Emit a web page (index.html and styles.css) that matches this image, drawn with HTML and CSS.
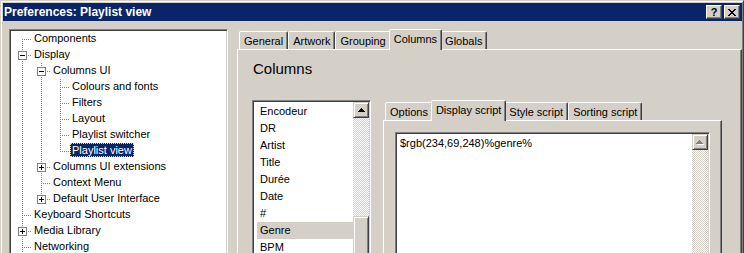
FILE: index.html
```html
<!DOCTYPE html>
<html lang="en">
<head>
  <meta charset="UTF-8" />
  <title>Preferences: Playlist view</title>
  <link rel="stylesheet" href="styles.css">
</head>
<body>
  <div class="window">
    <div class="titlebar">
      <span class="title">Preferences: Playlist view</span>
      <div class="caption-btns">
        <span class="cap-btn help">?</span>
        <span class="cap-btn close">
          <svg width="8" height="7" viewBox="0 0 8 7"><path d="M0 0h2v1H0zM6 0h2v1H6zM1 1h2v1H1zM5 1h2v1H5zM2 2h4v1H2zM3 3h2v1H3zM2 4h4v1H2zM1 5h2v1H1zM5 5h2v1H5zM0 6h2v1H0zM6 6h2v1H6z"/></svg>
        </span>
      </div>
    </div>

    <div class="client">
      <div class="tree">
        <div class="node"><span class="cell first"></span><span class="label">Components</span></div>
        <div class="node"><span class="cell tee"><i class="box minus"></i></span><span class="label">Display</span></div>
        <div class="node"><span class="cell pipe"></span><span class="cell tee"><i class="box minus"></i></span><span class="label">Columns UI</span></div>
        <div class="node"><span class="cell pipe"></span><span class="cell pipe"></span><span class="cell tee"></span><span class="label">Colours and fonts</span></div>
        <div class="node"><span class="cell pipe"></span><span class="cell pipe"></span><span class="cell tee"></span><span class="label">Filters</span></div>
        <div class="node"><span class="cell pipe"></span><span class="cell pipe"></span><span class="cell tee"></span><span class="label">Layout</span></div>
        <div class="node"><span class="cell pipe"></span><span class="cell pipe"></span><span class="cell tee"></span><span class="label">Playlist switcher</span></div>
        <div class="node"><span class="cell pipe"></span><span class="cell pipe"></span><span class="cell ell"></span><span class="label selected">Playlist view</span></div>
        <div class="node"><span class="cell pipe"></span><span class="cell tee"><i class="box plus"></i></span><span class="label">Columns UI extensions</span></div>
        <div class="node"><span class="cell pipe"></span><span class="cell tee"></span><span class="label">Context Menu</span></div>
        <div class="node"><span class="cell pipe"></span><span class="cell ell"><i class="box plus"></i></span><span class="label">Default User Interface</span></div>
        <div class="node"><span class="cell tee"></span><span class="label">Keyboard Shortcuts</span></div>
        <div class="node"><span class="cell tee"><i class="box plus"></i></span><span class="label">Media Library</span></div>
        <div class="node"><span class="cell tee"></span><span class="label">Networking</span></div>
        <div class="node"><span class="cell pipe"></span></div>
      </div>

      <div class="tabctl outer">
        <div class="tabs">
          <span class="tab">General</span>
          <span class="tab">Artwork</span>
          <span class="tab">Grouping</span>
          <span class="tab active">Columns</span>
          <span class="tab">Globals</span>
        </div>
        <div class="page">
          <h2 class="page-title">Columns</h2>
          <div class="columns-row">
            <div class="listbox">
              <ul class="items">
                <li>Encodeur</li>
                <li>DR</li>
                <li>Artist</li>
                <li>Title</li>
                <li>Durée</li>
                <li>Date</li>
                <li>#</li>
                <li class="sel">Genre</li>
                <li>BPM</li>
              </ul>
              <div class="vscroll">
                <span class="sb-btn"><svg width="7" height="4" viewBox="0 0 7 4"><path d="M3 0h1v1h1v1h1v1h1v1H0V3h1V2h1V1h1z"/></svg></span>
                <span class="sb-track upper"></span>
                <span class="sb-btn thumb"></span>
                <span class="sb-track"></span>
              </div>
            </div>

            <div class="tabctl inner">
              <div class="tabs">
                <span class="tab">Options</span>
                <span class="tab active">Display script</span>
                <span class="tab">Style script</span>
                <span class="tab">Sorting script</span>
              </div>
              <div class="page">
                <div class="script">
                  <div class="script-text">$rgb(234,69,248)%genre%</div>
                  <div class="vscroll">
                    <span class="sb-btn disabled"><svg width="8" height="5" viewBox="0 0 8 5"><path fill="#fff" d="M4 1h1v1h1v1h1v1h1v1H1V4h1V3h1V2h1z"/><path fill="#808080" d="M3 0h1v1h1v1h1v1h1v1H0V3h1V2h1V1h1z"/></svg></span>
                    <span class="sb-track"></span>
                  </div>
                </div>
              </div>
            </div>
          </div>
        </div>
      </div>
    </div>
  </div>
</body>
</html>
```

FILE: styles.css
```css
* {
  margin: 0;
  padding: 0;
  box-sizing: border-box;
}
:root {
  --face: #D4D0C8;
  --shadow: #808080;
  --dark: #404040;
  --vdots: repeating-linear-gradient(#808080 0 1px, transparent 1px 2px);
  --hdots: repeating-linear-gradient(90deg, #808080 0 1px, transparent 1px 2px);
}
body {
  width: 744px;
  height: 253px;
  overflow: hidden;
  background: var(--face);
  font-family: "Liberation Sans", Arial, sans-serif;
  font-size: 11px;
  color: #000;
}

/* window frame */
.window {
  height: 320px;
  border: 1px solid;
  border-color: var(--face) var(--dark) var(--dark) var(--face);
  box-shadow: inset 1px 1px #fff, inset -1px -1px var(--shadow);
  padding: 2px 1px 0 2px;
}
.titlebar {
  height: 18px;
  display: flex;
  align-items: center;
  padding: 0 2px 0 1px;
  background: #0A246A;
  color: #fff;
  font-weight: bold;
  font-size: 12px;
}
.caption-btns {
  margin-left: auto;
  display: flex;
  gap: 2px;
}
.cap-btn {
  width: 16px;
  height: 14px;
  display: flex;
  align-items: center;
  justify-content: center;
  background: var(--face);
  color: #000;
  border: 1px solid;
  border-color: #fff var(--dark) var(--dark) #fff;
  box-shadow: inset -1px -1px var(--shadow);
  font-size: 11px;
  line-height: 12px;
}
.cap-btn svg {
  display: block;
}

.client {
  display: flex;
  gap: 9px;
  padding: 8px 0 0 6px;
}

/* tree view */
.tree {
  width: 219px;
  height: 260px;
  flex: none;
  background: #fff;
  border: 1px solid;
  border-color: var(--shadow) #fff #fff var(--shadow);
  box-shadow: inset 1px 1px var(--dark), inset -1px -1px var(--face);
  padding: 1px;
}
.node {
  display: flex;
  height: 16px;
}
.cell {
  width: 19px;
  height: 16px;
  flex: none;
  background-repeat: no-repeat;
}
.pipe {
  background-image: var(--vdots);
  background-size: 1px 16px;
  background-position: 11px 0;
}
.tee, .ell, .first {
  width: 21px;
  background-image: var(--vdots), var(--hdots);
  background-position: 11px 0, 11px 8px;
}
.tee {
  background-size: 1px 16px, 10px 1px;
}
.ell {
  background-size: 1px 9px, 10px 1px;
}
.first {
  background-position: 11px 8px, 11px 8px;
  background-size: 1px 8px, 10px 1px;
}
.box {
  display: block;
  width: 9px;
  height: 9px;
  margin: 4px 0 0 7px;
  border: 1px solid var(--shadow);
  background: linear-gradient(#000, #000) center / 5px 1px no-repeat, #fff;
}
.box.plus {
  background: linear-gradient(#000, #000) center / 5px 1px no-repeat,
              linear-gradient(#000, #000) center / 1px 5px no-repeat, #fff;
}
.label {
  padding: 0 2px;
  height: 14px;
  line-height: 14px;
  white-space: nowrap;
}
.label.selected {
  background: #0A246A;
  color: #fff;
  outline: 1px dotted #E8D88A;
  outline-offset: -1px;
}

/* tab controls */
.tabctl {
  display: flex;
  flex-direction: column;
}
.tabctl.outer {
  flex: 1;
}
.tabctl.inner {
  width: 339px;
  flex: none;
}
.tabs {
  display: flex;
  align-items: flex-end;
  height: 20px;
  padding-left: 2px;
  position: relative;
  z-index: 1;
}
.tab {
  height: 18px;
  padding: 1px 4px 0;
  line-height: 16px;
  white-space: nowrap;
  background: var(--face);
  border: 1px solid;
  border-bottom: 0;
  border-color: #fff var(--dark) transparent #fff;
  border-radius: 2px 2px 0 0;
  box-shadow: inset -1px 0 var(--shadow);
}
.tab.active {
  height: 21px;
  margin: 0 -2px -1px;
  position: relative;
  z-index: 1;
}
.page {
  height: 240px;
  border: 1px solid;
  border-color: #fff var(--dark) var(--dark) #fff;
  box-shadow: inset -1px -1px var(--shadow);
  padding: 10px 0 0 14px;
}
.page-title {
  font-size: 15px;
  font-weight: normal;
  line-height: 18px;
  padding-left: 1px;
}
.columns-row {
  display: flex;
  gap: 12px;
  margin-top: 22px;
}
.inner .page {
  padding: 11px 11px 0 11px;
}

/* list box */
.listbox {
  width: 119px;
  height: 170px;
  flex: none;
  display: flex;
  background: #fff;
  border: 1px solid;
  border-color: var(--shadow) #fff #fff var(--shadow);
  box-shadow: inset 1px 1px var(--dark), inset -1px -1px var(--face);
  padding: 1px;
}
.items {
  flex: 1;
  list-style: none;
  padding: 1px 0 0 3px;
  overflow: hidden;
}
.items li {
  height: 17px;
  line-height: 17px;
  padding-left: 3px;
}
.items li.sel {
  background: var(--face);
}

/* scroll bars */
.vscroll {
  width: 16px;
  flex: none;
  display: flex;
  flex-direction: column;
}
.sb-btn {
  height: 16px;
  flex: none;
  display: flex;
  align-items: center;
  justify-content: center;
  background: var(--face);
  border: 1px solid;
  border-color: var(--face) var(--dark) var(--dark) var(--face);
  box-shadow: inset 1px 1px #fff, inset -1px -1px var(--shadow);
}
.sb-btn svg {
  display: block;
}
.sb-btn.thumb {
  height: 50px;
}
.sb-track {
  flex: 1;
  background: repeating-conic-gradient(#fff 0 25%, var(--face) 0 50%) 0 0 / 2px 2px;
}
.sb-track.upper {
  flex: none;
  height: 98px;
}

/* script edit box */
.script {
  height: 200px;
  display: flex;
  background: #fff;
  border: 1px solid;
  border-color: var(--shadow) #fff #fff var(--shadow);
  box-shadow: inset 1px 1px var(--dark), inset -1px -1px var(--face);
  padding: 1px;
}
.script-text {
  flex: 1;
  padding: 1px 3px;
  line-height: 16px;
  white-space: pre;
}
```
